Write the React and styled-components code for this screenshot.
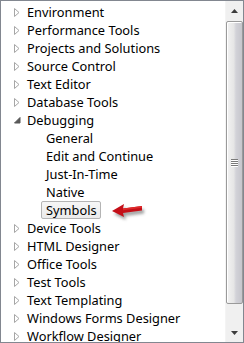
import React from 'react';
import styled, { createGlobalStyle } from 'styled-components';

const GlobalStyle = createGlobalStyle`
  html, body {
    margin: 0;
    padding: 0;
    background: #fff;
  }
  body {
    font-family: "Noto Sans", "Open Sans", sans-serif;
    font-size: 12.8px;
  }
`;

const items = [
  { label: 'Environment' },
  { label: 'Performance Tools' },
  { label: 'Projects and Solutions' },
  { label: 'Source Control' },
  { label: 'Text Editor' },
  { label: 'Database Tools' },
  { label: 'Debugging', open: true },
  { label: 'General', child: true },
  { label: 'Edit and Continue', child: true },
  { label: 'Just-In-Time', child: true },
  { label: 'Native', child: true },
  { label: 'Symbols', child: true, selected: true },
  { label: 'Device Tools' },
  { label: 'HTML Designer' },
  { label: 'Office Tools' },
  { label: 'Test Tools' },
  { label: 'Text Templating' },
  { label: 'Windows Forms Designer' },
  { label: 'Workflow Designer' },
];

export default function App() {
  return (
    <>
      <GlobalStyle />
      <Frame>
        <Tree>
          {items.map((item) => (
            <Row key={item.label} $child={item.child}>
              {!item.child && (
                <Expander>
                  {item.open ? <OpenGlyph /> : <ClosedGlyph />}
                </Expander>
              )}
              <Label $selected={item.selected}>{item.label}</Label>
              {item.selected && <Pointer />}
            </Row>
          ))}
        </Tree>
        <Scrollbar>
          <ArrowButton>
            <svg width="7" height="4" viewBox="0 0 7 4">
              <path d="M3.5 0 L7 4 L0 4 Z" fill="#3c3c3c" />
            </svg>
          </ArrowButton>
          <Track>
            <Thumb>
              <Grip>
                <span />
                <span />
                <span />
                <span />
              </Grip>
            </Thumb>
          </Track>
          <ArrowButton>
            <svg width="7" height="4" viewBox="0 0 7 4">
              <path d="M0 0 L7 0 L3.5 4 Z" fill="#3c3c3c" />
            </svg>
          </ArrowButton>
        </Scrollbar>
      </Frame>
    </>
  );
}

function ClosedGlyph() {
  return (
    <svg width="6" height="9" viewBox="0 0 6 9">
      <path d="M0.5 0.5 L5 4.5 L0.5 8.5 Z" fill="#fff" stroke="#a6a6a6" strokeWidth="1" />
    </svg>
  );
}

function OpenGlyph() {
  return (
    <svg width="7" height="7" viewBox="0 0 7 7">
      <path d="M6 0.5 L6 6 L0.5 6 Z" fill="#595959" stroke="#595959" strokeWidth="1" />
    </svg>
  );
}

function Pointer() {
  return (
    <PointerBox>
      <svg width="38" height="22" viewBox="0 0 38 22">
        <defs>
          <filter id="sh" x="-20%" y="-40%" width="150%" height="200%">
            <feGaussianBlur stdDeviation="1.4" />
          </filter>
        </defs>
        <g transform="translate(2,3)" filter="url(#sh)" opacity="0.5">
          <path d="M1 10 L13 3 L12 7.5 L31 5 L31 9.5 L12 12 L13 16 Z" fill="#444" />
        </g>
        <path d="M1 10 L13 3 L12 7.5 L31 5 L31 9.5 L12 12 L13 16 Z" fill="#c40f18" />
        <path d="M12 7.5 L31 5 L31 6.8 L12 9.2 Z" fill="#de2a2a" />
      </svg>
    </PointerBox>
  );
}

const Frame = styled.div`
  box-sizing: border-box;
  width: 244px;
  height: 343px;
  border: 1px solid #828790;
  display: flex;
  overflow: hidden;
  background: #fff;
`;

const Tree = styled.div`
  flex: 1;
  padding-top: 2px;
  overflow: hidden;
  min-width: 0;
`;

const Row = styled.div`
  height: 18px;
  display: flex;
  align-items: center;
  padding-left: ${(p) => (p.$child ? '40px' : '13px')};
  white-space: nowrap;
  color: #000;
`;

const Expander = styled.div`
  width: 8px;
  display: flex;
  align-items: center;
  padding-top: 1px;
`;

const Label = styled.span`
  line-height: 16px;
  height: 16px;
  padding: 0 3px 0 ${(p) => (p.$selected ? '4px' : '0')};
  margin-left: ${(p) => (p.$selected ? '0' : '4px')};
  border: 1px solid ${(p) => (p.$selected ? '#b4b4b4' : 'transparent')};
  border-radius: 2px;
  background: ${(p) => (p.$selected ? 'linear-gradient(#f6f6f6, #ebebeb)' : 'transparent')};
`;

const PointerBox = styled.div`
  display: flex;
  margin-left: 10px;
  margin-top: 4px;
`;

const Scrollbar = styled.div`
  width: 17px;
  flex-shrink: 0;
  display: flex;
  flex-direction: column;
  background: #f0f0f0;
  border-left: 1px solid #f4f4f4;
`;

const ArrowButton = styled.div`
  height: 19px;
  display: flex;
  align-items: center;
  justify-content: center;
  flex-shrink: 0;
`;

const Track = styled.div`
  flex: 1;
  padding: 1px 0 19px;
  display: flex;
`;

const Thumb = styled.div`
  flex: 1;
  box-sizing: border-box;
  border: 1px solid #9a9a9a;
  border-radius: 2px;
  background: linear-gradient(to right, #f2f2f2 0%, #e6e6e6 45%, #d2d2d8 60%, #c6c6cc 100%);
  box-shadow: inset 1px 1px 0 #fff;
  display: flex;
  align-items: center;
  justify-content: center;
`;

const Grip = styled.div`
  display: flex;
  flex-direction: column;
  gap: 1px;
  span {
    display: block;
    width: 7px;
    height: 1px;
    background: #7a7a7a;
    box-shadow: 0 1px 0 #fff;
  }
`;
